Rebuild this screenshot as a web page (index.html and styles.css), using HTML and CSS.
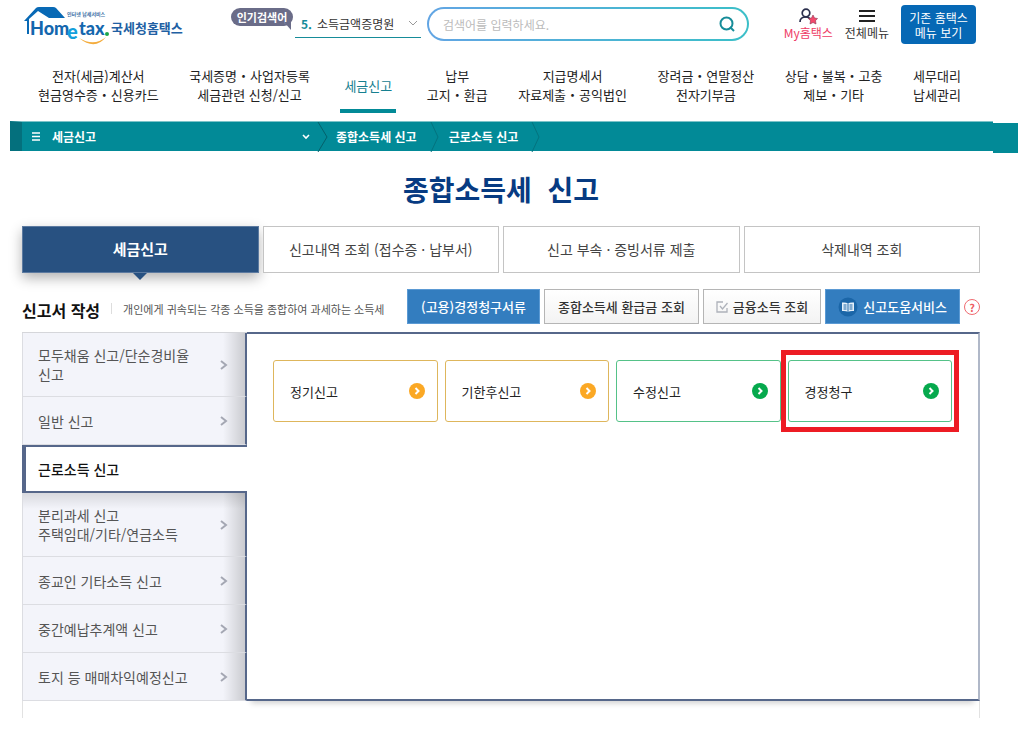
FILE: index.html
```html
<!DOCTYPE html>
<html lang="ko">
<head>
<meta charset="utf-8">
<meta name="viewport" content="width=device-width, initial-scale=1">
<title>국세청홈택스 - 종합소득세 신고</title>
<link rel="stylesheet" href="styles.css">
</head>
<body>
<header class="top">
  <a class="logo" href="#" aria-label="Hometax 국세청홈택스">
    <svg width="160" height="42" viewBox="0 0 160 42">
      <path d="M0 17 L12 4 Q13 3 15 3 H29 Q31 3 32 4 L41 14 H25 L14 7 L5 15 V30 H3 V17 Z" fill="#0869b5"/>
      <path d="M55 34 Q70 43 82 33 Q71 47 55 34 Z" fill="#f4ac3c"/>
      <text class="logo-main" x="6" y="31">Hom</text>
      <text class="logo-e" x="43" y="35">e</text>
      <text class="logo-main" x="55" y="31">tax</text>
      <circle cx="83" cy="30" r="2" fill="#1da64a"/>
      <text class="logo-small" x="43" y="12">인터넷 납세서비스</text>
      <text class="logo-ko" x="87" y="29">국세청홈택스</text>
    </svg>
  </a>
  <span class="badge">인기검색어</span>
  <a class="ticker" href="#"><b>5.</b><span>소득금액증명원</span>
    <svg width="10" height="6" viewBox="0 0 10 6"><path d="M1 1 L5 5 L9 1" fill="none" stroke="#999"/></svg>
  </a>
  <form class="search">
    <input type="text" aria-label="검색어" placeholder="검색어를 입력하세요.">
    <button type="button" aria-label="검색">
      <svg width="16" height="16" viewBox="0 0 16 16" fill="none" stroke="#168c99" stroke-width="2"><circle cx="7.5" cy="7.5" r="6"/><path d="M11 11 L15 15"/></svg>
    </button>
  </form>
  <a class="util my" href="#">
    <svg width="20" height="17" viewBox="0 0 20 17"><circle cx="8" cy="5" r="3.8" fill="none" stroke="#2b2f4c" stroke-width="1.7"/><path d="M2 14 Q2 9 8 9 Q11 9 12 11" fill="none" stroke="#2b2f4c" stroke-width="1.7"/><path d="M15 7 L16.5 10 L19.5 10.5 L17.5 12.7 L18 16 L15 14.5 L12 16 L12.5 12.7 L10.5 10.5 L13.5 10 Z" fill="#f34a6c" stroke="#8a3450" stroke-width=".6"/></svg>
    <span>My홈택스</span>
  </a>
  <a class="util" href="#">
    <svg width="16" height="17" viewBox="0 0 16 17" stroke="#222" stroke-width="2"><path d="M0 3 H16 M0 8 H16 M0 13 H16"/></svg>
    <span>전체메뉴</span>
  </a>
  <button class="old-menu" type="button">기존 홈택스<br>메뉴 보기</button>
</header>

<nav class="gnb">
  <a href="#">전자(세금)계산서<br>현금영수증・신용카드</a>
  <a href="#">국세증명・사업자등록<br>세금관련 신청/신고</a>
  <a class="on" href="#">세금신고</a>
  <a href="#">납부<br>고지・환급</a>
  <a href="#">지급명세서<br>자료제출・공익법인</a>
  <a href="#">장려금・연말정산<br>전자기부금</a>
  <a href="#">상담・불복・고충<br>제보・기타</a>
  <a href="#">세무대리<br>납세관리</a>
</nav>

<div class="path">
  <div class="path-bar">
    <button class="path-menu" type="button">
      <svg width="8" height="9" viewBox="0 0 8 9" stroke="#fff" stroke-width="1.4"><path d="M0 1 H8 M0 4.5 H8 M0 8 H8"/></svg>
      <span>세금신고</span>
      <svg class="caret" width="8" height="6" viewBox="0 0 8 6"><path d="M1 1 L4 4 L7 1" fill="none" stroke="#fff" stroke-width="1.6"/></svg>
    </button>
    <svg class="sep" width="11" height="30" viewBox="0 0 11 30"><path d="M1 0 L10 15 L1 30" fill="none" stroke="#04606b"/></svg>
    <a href="#">종합소득세 신고</a>
    <svg class="sep" width="11" height="30" viewBox="0 0 11 30"><path d="M1 0 L8 15 L1 30" fill="none" stroke="#04737f"/></svg>
    <a href="#">근로소득 신고</a>
    <svg class="sep" width="11" height="30" viewBox="0 0 11 30"><path d="M1 0 L8 15 L1 30" fill="none" stroke="#04737f"/></svg>
  </div>
  <div class="path-end"></div>
</div>

<main>
  <h1>종합소득세&nbsp; 신고</h1>
  <div class="tabs">
    <button class="on" type="button">세금신고</button>
    <button type="button">신고내역 조회 (접수증 · 납부서)</button>
    <button type="button">신고 부속 · 증빙서류 제출</button>
    <button type="button">삭제내역 조회</button>
  </div>

  <div class="tools">
    <h2>신고서 작성</h2>
    <p>개인에게 귀속되는 각종 소득을 종합하여 과세하는 소득세</p>
    <div class="buttons">
      <button class="blue" type="button">(고용)경정청구서류</button>
      <button type="button">종합소득세 환급금 조회</button>
      <button class="tight" type="button">
        <svg width="12" height="12" viewBox="0 0 12 12" fill="none" stroke="#aeb2ba" stroke-width="1.3"><path d="M7 1 H1 V11 H11 V7"/><path d="M4 5 L6.5 8 L11.5 2"/></svg>
        금융소득 조회</button>
      <button class="blue tight" type="button">
        <svg width="20" height="20" viewBox="0 0 20 20"><circle cx="10" cy="10" r="9.5" fill="#1b66a8"/><path d="M4 5.5 Q8 5 10 6.5 Q12 5 16 5.5 V14 Q12 13.5 10 15 Q8 13.5 4 14 Z" fill="#e5f0fa"/><path d="M10 6.5 V15 M5.5 8 H8.5 M5.5 10 H8.5 M5.5 12 H8.5 M11.5 8 H14.5 M11.5 10 H14.5 M11.5 12 H14.5" stroke="#1b66a8"/></svg>
        신고도움서비스</button>
      <button class="help" type="button" aria-label="도움말">?</button>
    </div>
  </div>

  <div class="board">
    <nav class="side">
      <a href="#"><span>모두채움 신고/단순경비율 신고</span><svg width="8" height="10" viewBox="0 0 8 10"><path d="M1 1 L6 5 L1 9"/></svg></a>
      <a href="#"><span>일반 신고</span><svg width="8" height="10" viewBox="0 0 8 10"><path d="M1 1 L6 5 L1 9"/></svg></a>
      <a class="on" href="#"><span>근로소득 신고</span></a>
      <a class="below" href="#"><span>분리과세 신고<br>주택임대/기타/연금소득</span><svg width="8" height="10" viewBox="0 0 8 10"><path d="M1 1 L6 5 L1 9"/></svg></a>
      <a href="#"><span>종교인 기타소득 신고</span><svg width="8" height="10" viewBox="0 0 8 10"><path d="M1 1 L6 5 L1 9"/></svg></a>
      <a href="#"><span>중간예납추계액 신고</span><svg width="8" height="10" viewBox="0 0 8 10"><path d="M1 1 L6 5 L1 9"/></svg></a>
      <a href="#"><span>토지 등 매매차익예정신고</span><svg width="8" height="10" viewBox="0 0 8 10"><path d="M1 1 L6 5 L1 9"/></svg></a>
    </nav>
    <section class="panel">
      <div class="cards">
        <button class="amber" type="button">정기신고<svg width="16" height="16" viewBox="0 0 16 16"><circle cx="8" cy="8" r="8"/><path d="M6.5 5 L9.5 8 L6.5 11"/></svg></button>
        <button class="amber" type="button">기한후신고<svg width="16" height="16" viewBox="0 0 16 16"><circle cx="8" cy="8" r="8"/><path d="M6.5 5 L9.5 8 L6.5 11"/></svg></button>
        <button class="green" type="button">수정신고<svg width="16" height="16" viewBox="0 0 16 16"><circle cx="8" cy="8" r="8"/><path d="M6.5 5 L9.5 8 L6.5 11"/></svg></button>
        <button class="green marked" type="button">경정청구<svg width="16" height="16" viewBox="0 0 16 16"><circle cx="8" cy="8" r="8"/><path d="M6.5 5 L9.5 8 L6.5 11"/></svg></button>
      </div>
    </section>
  </div>
  <div class="tail"></div>
</main>
</body>
</html>
```
FILE: styles.css
```css
* { box-sizing: border-box; }
body {
  margin: 0;
  background: #fff;
  color: #333;
  font-family: "Noto Sans CJK KR", sans-serif;
  font-size: 13px;
}
a { color: inherit; text-decoration: none; }
button, input { font: inherit; color: inherit; padding: 0; }
button { white-space: nowrap; }
svg { display: block; flex: none; }
h1, h2, p { margin: 0; }

.top {
  display: flex;
  align-items: flex-start;
  height: 48px;
  padding: 4px 42px 0 24px;
}
.logo { width: 207px; }
.logo-main { font: 900 18px Lato, sans-serif; fill: #1467ae; }
.logo-e { font: 900 20px Lato, sans-serif; fill: #12a0dc; }
.logo-small { font-size: 5px; font-weight: bold; fill: #3b6fa5; }
.logo-ko { font-size: 13px; font-weight: bold; fill: #2160a3; }
.badge {
  position: relative;
  width: 62px;
  margin: 4px 2px 0 0;
  border-radius: 9px;
  background: #6a6c88;
  color: #fff;
  font-size: 11px;
  font-weight: bold;
  line-height: 18px;
  text-align: center;
}
.badge::after {
  content: "";
  position: absolute;
  right: 2px;
  bottom: -4px;
  border-top: 8px solid #6a6c88;
  border-left: 7px solid transparent;
}
.ticker {
  display: flex;
  align-items: center;
  width: 126px;
  height: 34px;
  margin-right: 6px;
  padding: 5px 3px 0 6px;
  border-bottom: 1px solid #168c99;
  font-size: 12px;
}
.ticker b { width: 16px; color: #168c99; }
.ticker svg { margin-left: auto; }
.search {
  display: flex;
  flex: 1;
  align-items: center;
  height: 34px;
  margin: 3px 35px 0 0;
  padding: 0 12px 0 14px;
  border: 2px solid transparent;
  border-radius: 17px;
  background: linear-gradient(#fff, #fff) padding-box, linear-gradient(90deg, #62a5e4, #3bbfc8) border-box;
}
.search input { flex: 1; min-width: 0; border: 0; outline: 0; background: none; font-size: 12px; }
.search input::placeholder { color: #bbb; opacity: 1; }
.search button { border: 0; background: none; }
.util {
  display: flex;
  flex-direction: column;
  align-items: center;
  margin: 4px 12px 0 0;
  font-size: 12px;
  line-height: 16px;
}
.my { color: #ee3b65; }
.old-menu {
  width: 75px;
  height: 39px;
  margin-top: 1px;
  border: 0;
  border-radius: 4px;
  background: #0668b5;
  color: #fff;
  font-size: 12px;
  line-height: 15px;
}

.gnb {
  display: flex;
  justify-content: space-between;
  height: 73px;
  padding: 0 57px 0 38px;
  color: #222;
  line-height: 19px;
  text-align: center;
  white-space: nowrap;
}
.gnb a { height: 65px; padding-top: 18px; }
.gnb .on {
  padding: 28px 4px 0;
  border-bottom: 4px solid #028a97;
  color: #168090;
}

.path { display: flex; align-items: flex-start; padding-left: 10px; }
.path-bar {
  display: flex;
  flex: 1;
  align-items: center;
  height: 30px;
  border-top: 1px solid #7cc3c9;
  border-left: 12px solid #04707d;
  background: #028a97;
  color: #fff;
  font-size: 12px;
  font-weight: bold;
}
.path-bar a { padding: 0 13px 0 8px; }
.path-end { width: 25px; height: 30px; margin-top: 2px; background: #028a97; }
.path-menu {
  display: flex;
  align-items: center;
  gap: 12px;
  width: 295px;
  padding: 0 7px 0 10px;
  border: 0;
  background: none;
}
.caret { margin-left: auto; }

main { padding: 0 38px 0 22px; }
h1 {
  padding: 15px 0 16px;
  color: #073b82;
  font-size: 28px;
  line-height: 42px;
  text-align: center;
}
.tabs { display: grid; grid-template-columns: repeat(4, 1fr); gap: 4px; }
.tabs button {
  position: relative;
  height: 47px;
  padding-bottom: 2px;
  border: 1px solid #c4c4c4;
  background: #fff;
  color: #444;
  font-size: 14px;
}
.tabs .on {
  border-color: #5c7aa0;
  background: #285181;
  color: #fff;
  font-size: 15px;
  font-weight: bold;
  box-shadow: 0 5px 12px rgba(0, 0, 0, .3);
}
.tabs .on::after {
  content: "";
  position: absolute;
  top: 46px;
  left: 50%;
  margin-left: -7px;
  border: 7px solid transparent;
  border-top-color: #285181;
  border-bottom: 0;
}

.tools { display: flex; align-items: center; height: 59px; padding-top: 12px; }
.tools h2 { padding-top: 2px; color: #111; font-size: 16px; white-space: nowrap; }
.tools p {
  margin-left: 11px;
  padding-left: 12px;
  background: linear-gradient(#ddd, #ddd) 0 50% / 1px 11px no-repeat;
  color: #555;
  font-size: 11px;
  white-space: nowrap;
}
.buttons { display: flex; align-items: center; gap: 4px; margin: -4px 0 0 auto; }
.buttons button {
  display: flex;
  align-items: center;
  gap: 5px;
  height: 35px;
  padding: 0 13px;
  border: 1px solid #b5b5b5;
  background: linear-gradient(#fff, #f3f3f3);
  font-weight: 500;
}
.buttons .tight { padding: 0 12px; }
.buttons .blue { border-color: #5b9ad4; background: #337dbf; color: #fff; }
.buttons .help {
  justify-content: center;
  width: 16px;
  height: 16px;
  padding: 0;
  border: 1px solid #ef6b70;
  border-radius: 8px;
  background: none;
  color: #ef5b62;
  font-size: 11px;
  font-weight: bold;
}

.board { display: flex; }
.side {
  z-index: 1;
  width: 225px;
  margin-right: -2px;
  border-top: 1px solid #d5d6da;
  font-size: 14px;
  line-height: 19px;
}
.side a {
  display: flex;
  align-items: center;
  justify-content: space-between;
  min-height: 48px;
  padding: 13px 17px 12px 15px;
  border: solid #dcdde2;
  border-width: 0 0 1px 1px;
  border-right: 2px solid #56678a;
  background: linear-gradient(90deg, rgba(0, 0, 0, 0) 200px, rgba(0, 0, 0, .17) 100%) #f3f4fa;
  color: #555;
}
.side span { width: 160px; }
.side path { fill: none; stroke: #a4a7b3; stroke-width: 2; }
.side .on {
  border: solid #56678a;
  border-width: 2px 0 2px 4px;
  padding-left: 12px;
  background: #fff;
  color: #111;
  font-weight: 500;
}
.side .below {
  background:
    linear-gradient(rgba(0, 0, 0, .11), rgba(0, 0, 0, 0) 16px),
    linear-gradient(90deg, rgba(0, 0, 0, 0) 200px, rgba(0, 0, 0, .17) 100%) #f3f4fa;
}
.panel {
  flex: 1;
  padding: 26px;
  border: solid #56678a;
  border-width: 2px 2px 2px 0;
  border-right-color: #b0b8c8;
  box-shadow: 0 8px 6px -6px rgba(0, 0, 0, .2);
}
.cards { display: grid; grid-template-columns: repeat(4, 1fr); gap: 7px; padding-left: 2px; }
.cards button {
  position: relative;
  display: flex;
  align-items: center;
  justify-content: space-between;
  height: 62px;
  padding: 0 12px 0 16px;
  border: 1px solid;
  border-radius: 3px;
  background: #fff;
  color: #222;
}
.cards .amber { border-color: #deb65c; }
.cards .green { border-color: #55c288; }
.cards path { fill: none; stroke: #fff; stroke-width: 2; }
.amber circle { fill: #fba824; }
.green circle { fill: #06a94d; }
.cards .marked::after {
  content: "";
  position: absolute;
  inset: -11px -8px;
  border: 5px solid #ed1c24;
}
.tail { height: 17px; border: solid #e2e2e2; border-width: 0 1px; }
```
